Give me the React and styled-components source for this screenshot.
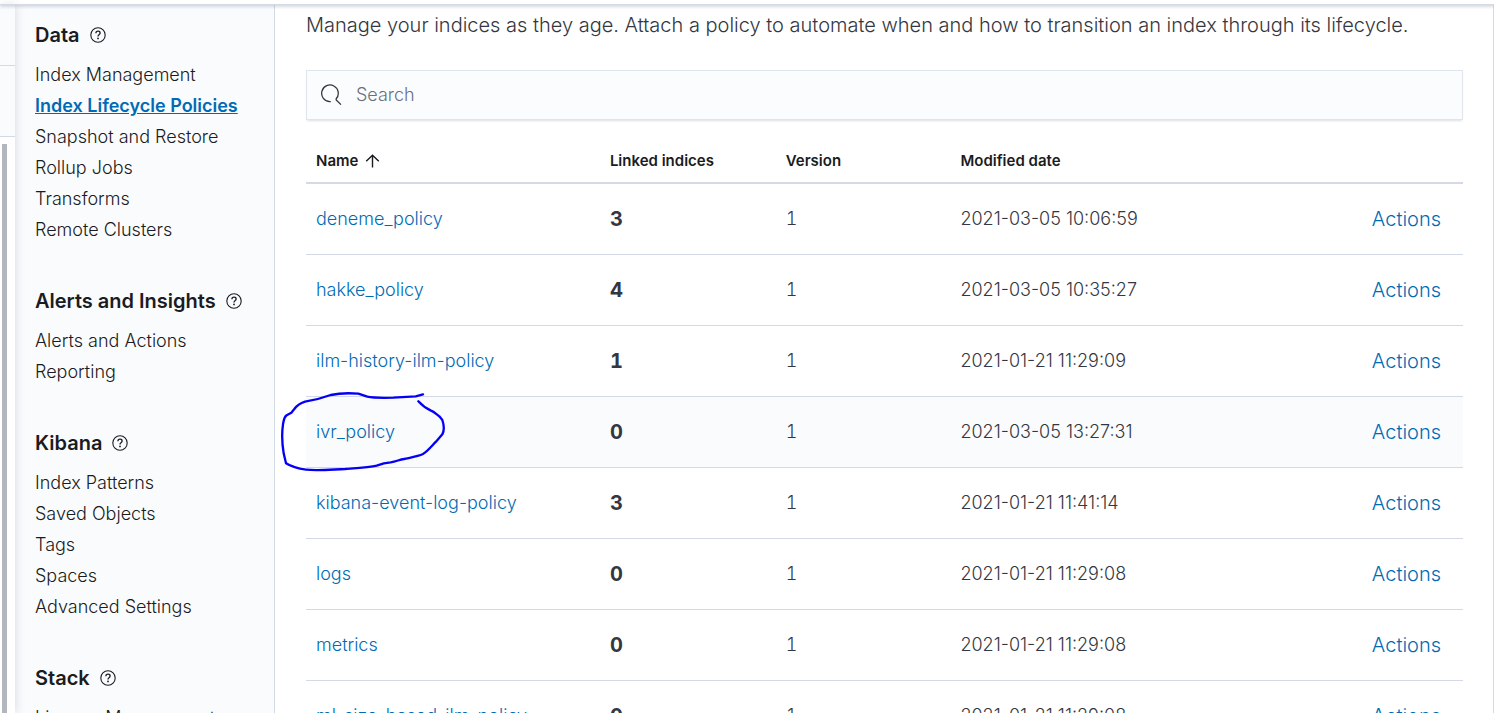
import React from "react";
import styled, { createGlobalStyle } from "styled-components";

const Global = createGlobalStyle`
  *, *::before, *::after { box-sizing: border-box; }
  body {
    margin: 0;
    background: #fff;
    color: #343741;
    font-family: Inter, "Liberation Sans", sans-serif;
    font-size: 18px;
    font-weight: 300;
  }
`;

const Page = styled.div`
  display: flex;
  flex-direction: column;
  height: 100vh;
  overflow: hidden;
`;

const TopBar = styled.header`
  flex: none;
  height: 5px;
  border-bottom: 1px solid #d3dae6;
  box-shadow: 0 2px 3px rgba(105, 112, 125, 0.25);
  z-index: 2;
`;

const Body = styled.div`
  display: flex;
  flex: 1;
  min-height: 0;
`;

const Rail = styled.div`
  flex: none;
  display: flex;
  flex-direction: column;
  width: 15px;
  box-shadow: 1px 0 10px rgba(105, 112, 125, 0.22);
  z-index: 1;
  background: #fff;
`;

const RailBlock = styled.div`
  flex: none;
  height: ${(p) => p.$height}px;
  background: #fafbfd;
  border-bottom: 1px solid #d3dae6;
`;

const RailThumb = styled.div`
  flex: 1;
  width: 5px;
  margin: 7px 0 0 2px;
  background: #b2b6be;
`;

const Sidebar = styled.nav`
  flex: none;
  display: flex;
  flex-direction: column;
  gap: 41px;
  width: 260px;
  padding: 15px 20px 0;
  background: #fafbfd;
  border-right: 1px solid #d3dae6;
  overflow: hidden;
`;

const SectionTitle = styled.h2`
  display: flex;
  align-items: center;
  gap: 10px;
  margin: 0 0 9px;
  color: #1a1c21;
  font-size: 20px;
  font-weight: 600;
  line-height: 30px;
  white-space: nowrap;
`;

const NavList = styled.ul`
  margin: 0;
  padding: 0;
  list-style: none;
`;

const NavLink = styled.a`
  display: block;
  width: max-content;
  color: ${(p) => (p.$active ? "#006bb4" : "#1a1c21")};
  font-weight: ${(p) => (p.$active ? 600 : 300)};
  line-height: 31px;
  text-decoration: ${(p) => (p.$active ? "underline" : "none")};
`;

const Main = styled.main`
  flex: 1;
  min-width: 0;
  padding: 5px 30px 0 31px;
  border-right: 1px solid #d3dae6;
  overflow: hidden;
`;

const Description = styled.p`
  margin: 0 0 30px;
  font-size: 20px;
  line-height: 30px;
`;

const SearchBox = styled.label`
  display: flex;
  align-items: center;
  gap: 14px;
  height: 50px;
  padding: 0 14px 1px;
  background: #fbfcfd;
  border: 1px solid #e0e4ed;
  box-shadow: 0 2px 2px -1px rgba(152, 162, 179, 0.35);
`;

const SearchInput = styled.input`
  flex: 1;
  min-width: 0;
  padding: 0;
  border: 0;
  outline: 0;
  background: transparent;
  color: #343741;
  font: inherit;
  &::placeholder { color: #69707d; opacity: 1; }
`;

const Table = styled.table`
  width: 100%;
  margin-top: 17px;
  table-layout: fixed;
  border-collapse: separate;
  border-spacing: 0;
`;

const Col = styled.col`
  width: ${(p) => p.$width};
`;

const HeadCell = styled.th`
  height: 47px;
  padding: 2px 10px 0;
  border-bottom: 2px solid #d3dae6;
  color: #1a1c21;
  font-size: 15px;
  font-weight: 600;
  text-align: left;
`;

const SortButton = styled.button`
  display: flex;
  align-items: center;
  gap: 7px;
  padding: 0;
  border: 0;
  background: none;
  color: inherit;
  font: inherit;
`;

const Row = styled.tr`
  background: ${(p) => (p.$hover ? "#fafbfd" : "transparent")};
`;

const Cell = styled.td`
  position: relative;
  height: 71px;
  padding: 0 10px 2px;
  border-bottom: 1px solid #d3dae6;
`;

const VersionCell = styled(Cell)`
  font-variant-numeric: tabular-nums;
`;

const CountCell = styled(Cell)`
  padding-bottom: 0;
  font-size: 20px;
  font-weight: 700;
  font-variant-numeric: tabular-nums;
`;

const ActionCell = styled(Cell)`
  padding: 0 22px 0 0;
  text-align: right;
`;

const PolicyLink = styled.a`
  color: #006bb4;
  text-decoration: none;
`;

const ActionButton = styled.button`
  padding: 0;
  border: 0;
  background: none;
  color: #006bb4;
  font: inherit;
  font-size: 20px;
`;

const InkMark = styled.svg`
  position: absolute;
  left: -26px;
  top: -7px;
  z-index: 1;
  pointer-events: none;
`;

const HelpIcon = () => (
  <svg width="16" height="16" viewBox="0 0 16 16" fill="none" stroke="#1a1c21" strokeWidth="1.1" aria-hidden="true">
    <circle cx="8" cy="8" r="7.2" />
    <path d="M5.9 6.2C5.9 4.9 6.8 4.2 8 4.2s2.1.7 2.1 1.8c0 .9-.5 1.3-1.1 1.7-.7.5-1 .8-1 1.7" strokeWidth="1.3" />
    <circle cx="8" cy="11.4" r="0.9" fill="#1a1c21" stroke="none" />
  </svg>
);

const SearchIcon = () => (
  <svg width="21" height="21" viewBox="0 0 21 21" fill="none" stroke="#343741" strokeWidth="1.3" aria-hidden="true">
    <path d="M9.8 17.6H8.8A8.3 8.3 0 1 1 15.2 14.8V16L20 20.6" />
  </svg>
);

const SortIcon = () => (
  <svg width="15" height="14" viewBox="0 0 15 14" fill="none" stroke="#1a1c21" strokeWidth="1.4" aria-hidden="true">
    <path d="M7.5 13.5V1.2M1.2 7.2l6.3-6 6.3 6" />
  </svg>
);

const CircleMark = () => (
  <InkMark width="166" height="83" viewBox="30 30 498 249" fill="none" stroke="#0500f5" strokeWidth="7" strokeLinecap="round" strokeLinejoin="round" aria-hidden="true">
    <path d="M459 43L437 49L370 53C335 54 310 54 292 50L265 41C240 39 205 40 182 45C160 53 125 62 105 65C90 70 78 80 73 87L64 98L50 106C41 112 42 120 39 133C35 160 36 190 41 220L48 250C62 259 85 266 108 269C140 273 180 269 225 267C265 264 300 262 320 257C335 251 345 248 362 247C380 244 388 239 402 237C425 232 445 229 459 222C473 214 487 196 498 185L517 163C524 150 523 138 517 120L508 109C495 99 492 95 483 92C465 84 455 75 445 64" />
  </InkMark>
);

const sections = [
  { title: "Data", items: ["Index Management", "Index Lifecycle Policies", "Snapshot and Restore", "Rollup Jobs", "Transforms", "Remote Clusters"] },
  { title: "Alerts and Insights", items: ["Alerts and Actions", "Reporting"] },
  { title: "Kibana", items: ["Index Patterns", "Saved Objects", "Tags", "Spaces", "Advanced Settings"] },
  { title: "Stack", items: ["License Management"] },
];

const activeItem = "Index Lifecycle Policies";

const policies = [
  { name: "deneme_policy", linked: 3, date: "2021-03-05 10:06:59" },
  { name: "hakke_policy", linked: 4, date: "2021-03-05 10:35:27" },
  { name: "ilm-history-ilm-policy", linked: 1, date: "2021-01-21 11:29:09" },
  { name: "ivr_policy", linked: 0, date: "2021-03-05 13:27:31", marked: true },
  { name: "kibana-event-log-policy", linked: 3, date: "2021-01-21 11:41:14" },
  { name: "logs", linked: 0, date: "2021-01-21 11:29:08" },
  { name: "metrics", linked: 0, date: "2021-01-21 11:29:08" },
  { name: "ml-size-based-ilm-policy", linked: 0, date: "2021-01-21 11:29:08" },
];

export default function App() {
  return (
    <Page>
      <Global />
      <TopBar />
      <Body>
        <Rail>
          <RailBlock $height={61} />
          <RailBlock $height={71} />
          <RailThumb />
        </Rail>
        <Sidebar>
          {sections.map((section) => (
            <section key={section.title}>
              <SectionTitle>
                {section.title}
                <HelpIcon />
              </SectionTitle>
              <NavList>
                {section.items.map((item) => (
                  <li key={item}>
                    <NavLink href="#" $active={item === activeItem}>{item}</NavLink>
                  </li>
                ))}
              </NavList>
            </section>
          ))}
        </Sidebar>
        <Main>
          <Description>
            Manage your indices as they age. Attach a policy to automate when and how to transition an index through its lifecycle.
          </Description>
          <SearchBox>
            <SearchIcon />
            <SearchInput type="text" placeholder="Search" aria-label="Search" />
          </SearchBox>
          <Table>
            <colgroup>
              <Col $width="25.4%" />
              <Col $width="15.2%" />
              <Col $width="15.1%" />
              <Col $width="auto" />
              <Col $width="15%" />
            </colgroup>
            <thead>
              <tr>
                <HeadCell aria-sort="ascending">
                  <SortButton type="button">Name<SortIcon /></SortButton>
                </HeadCell>
                <HeadCell>Linked indices</HeadCell>
                <HeadCell>Version</HeadCell>
                <HeadCell>Modified date</HeadCell>
                <HeadCell as="td" />
              </tr>
            </thead>
            <tbody>
              {policies.map((policy) => (
                <Row key={policy.name} $hover={policy.marked}>
                  <Cell>
                    <PolicyLink href="#">{policy.name}</PolicyLink>
                    {policy.marked && <CircleMark />}
                  </Cell>
                  <CountCell>{policy.linked}</CountCell>
                  <VersionCell>1</VersionCell>
                  <Cell>{policy.date}</Cell>
                  <ActionCell>
                    <ActionButton type="button">Actions</ActionButton>
                  </ActionCell>
                </Row>
              ))}
            </tbody>
          </Table>
        </Main>
      </Body>
    </Page>
  );
}
